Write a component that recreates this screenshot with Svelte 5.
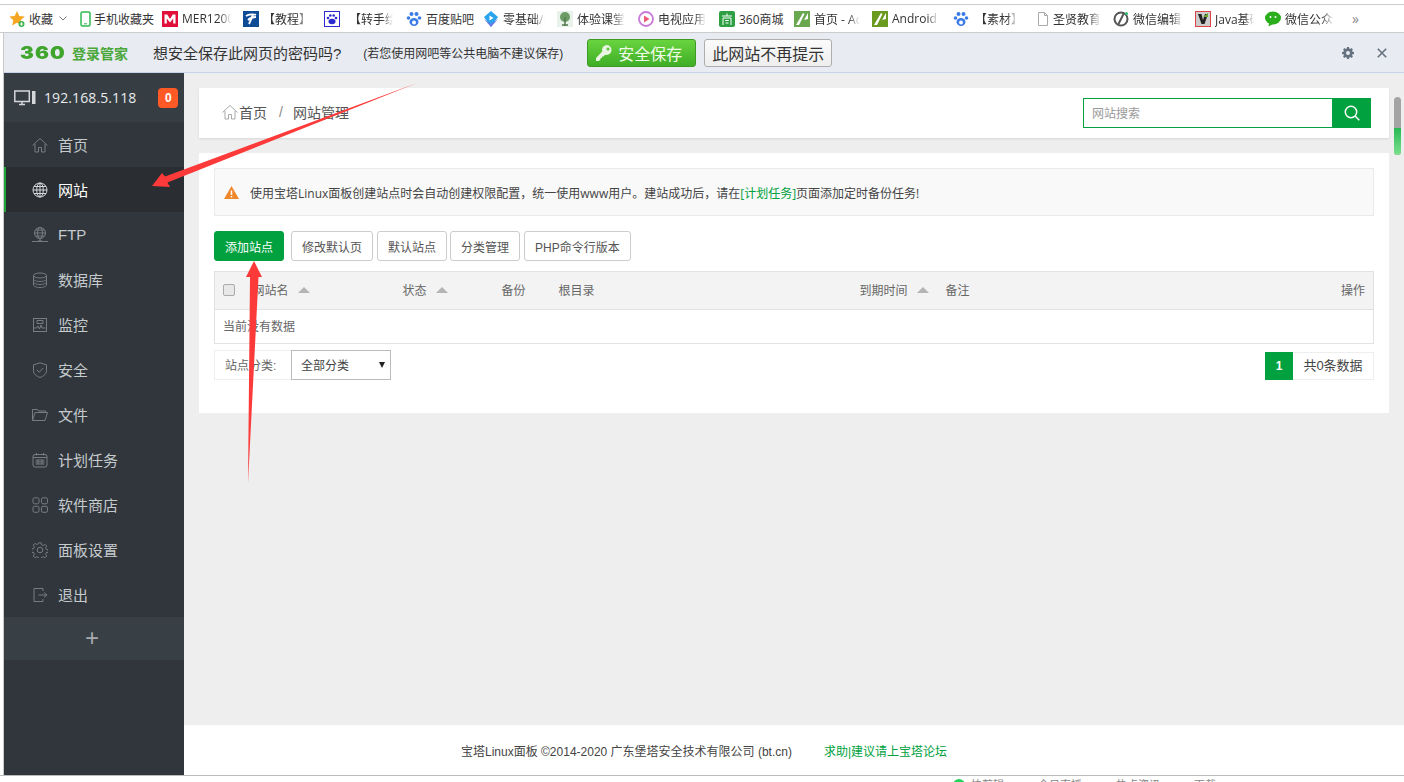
<script>
	const marks = [
		{ id: 'star', text: '收藏', w: 71 },
		{ id: 'phone', text: '手机收藏夹', w: 82, gap: -2 },
		{ id: 'mer', text: 'MER1200', w: 81, clip: 50 },
		{ id: 'tele', text: '【教程】', w: 81, clip: 45 },
		{ id: 'paw2', text: '【转手绘', w: 82, clip: 44, gap: 9 },
		{ id: 'paw', text: '百度贴吧', w: 77 },
		{ id: 'zero', text: '零基础/基', w: 74, clip: 42 },
		{ id: 'tree', text: '体验课堂', w: 81, clip: 48 },
		{ id: 'tv', text: '电视应用', w: 81, clip: 48 },
		{ id: 'shop', text: '360商城', w: 75 },
		{ id: 'as', text: '首页 - Ad', w: 78, clip: 46 },
		{ id: 'as2', text: 'Android', w: 81, clip: 47 },
		{ id: 'paw', text: '【素材】', w: 82, clip: 42, gap: 6 },
		{ id: 'doc', text: '圣贤教育', w: 78, clip: 48, gap: 2 },
		{ id: 'edit', text: '微信编辑', w: 82, clip: 50 },
		{ id: 'java', text: 'Java基础', w: 70, clip: 39 },
		{ id: 'wx', text: '微信公众号', w: 90, clip: 49 }
	];

	const nav = [
		{ id: 'home', text: '首页' },
		{ id: 'globe', text: '网站', active: true },
		{ id: 'ftp', text: 'FTP' },
		{ id: 'db', text: '数据库' },
		{ id: 'monitor', text: '监控' },
		{ id: 'shield', text: '安全' },
		{ id: 'folder', text: '文件' },
		{ id: 'cal', text: '计划任务' },
		{ id: 'apps', text: '软件商店' },
		{ id: 'gear', text: '面板设置' },
		{ id: 'exit', text: '退出' }
	];

	const toolbar = [
		{ text: '修改默认页', gap: 4 },
		{ text: '默认站点', gap: 3 },
		{ text: '分类管理', gap: 4 },
		{ text: 'PHP命令行版本', gap: 0 }
	];
</script>

{#snippet markIcon(id)}
	<svg class="mark-icon" viewBox="0 0 16 16">
		{#if id === 'star'}
			<path d="M8 0l2.3 5 5.4.6-4 3.6 1.1 5.3L8 11.8 3.2 14.500l1.100-5.300-4-3.600L5.700 5z" fill="#f5a623" />
			<circle cx="12.500" cy="13" r="3" fill="#3cb44a" />
			<path d="M12.500 11.300v3.400M10.800 13h3.400" stroke="#fff" stroke-width="1" />
		{:else if id === 'phone'}
			<rect x="1" y="1" width="9" height="14" rx="1.500" fill="none" stroke="#2dbb4f" stroke-width="1.500" />
			<path d="M4 12.800h3" stroke="#2dbb4f" />
		{:else if id === 'mer'}
			<rect width="16" height="16" fill="#e0103a" />
			<path d="M2.500 12.500V3.500h2.700L8 8l2.800-4.500h2.700v9h-2.300V7.500L8 11.500 4.800 7.500v5z" fill="#fff" />
		{:else if id === 'tele'}
			<rect width="16" height="16" fill="#0f4c96" />
			<path d="M3 5c3-2 8-2 10-1M5 9c2-2 5-3 8-3M10 3c-1 4-3 8-4 10" fill="none" stroke="#fff" stroke-width="1.800" />
		{:else if id === 'paw2'}
			<rect x=".5" y=".5" width="15" height="15" fill="#fff" stroke="#2b2bd0" />
			<ellipse cx="8" cy="10.500" rx="3.500" ry="2.800" fill="#2b2bd0" />
			<circle cx="4" cy="7" r="1.300" fill="#2b2bd0" /><circle cx="12" cy="7" r="1.300" fill="#2b2bd0" />
			<circle cx="6.300" cy="4.500" r="1.300" fill="#2b2bd0" /><circle cx="9.700" cy="4.500" r="1.300" fill="#2b2bd0" />
		{:else if id === 'paw'}
			<ellipse cx="8" cy="11" rx="4.500" ry="4" fill="#3a7be8" />
			<circle cx="2.500" cy="7" r="1.800" fill="#3a7be8" /><circle cx="13.500" cy="7" r="1.800" fill="#3a7be8" />
			<circle cx="5.500" cy="3" r="2" fill="#3a7be8" /><circle cx="10.500" cy="3" r="2" fill="#3a7be8" />
			<circle cx="8" cy="11.500" r="2" fill="#fff" />
		{:else if id === 'zero'}
			<path d="M8 0l7 6-7 10L1 6z" fill="#2aa4ec" />
			<path d="M1 8l7 8 7-8-7 5z" fill="#6b78e6" />
			<path d="M6.500 4.500l4 2.500-4 2.500z" fill="#fff" />
		{:else if id === 'tree'}
			<rect width="16" height="16" fill="#e8f1ea" />
			<circle cx="8" cy="6" r="5" fill="#6b9c66" />
			<path d="M8 6v9M5 14h6" stroke="#557a4e" stroke-width="1.500" />
		{:else if id === 'tv'}
			<circle cx="8" cy="8" r="7" fill="none" stroke="#c77ad8" stroke-width="1.800" />
			<path d="M6 4.500l5.500 3.500L6 11.500z" fill="#ef5a7a" />
		{:else if id === 'shop'}
			<rect width="16" height="16" rx="2" fill="#2ea043" />
			<path d="M3 5h10M8 2.500V5M4 14V7h8v7M6.200 9.500h3.600M6.500 12h3" stroke="#fff" fill="none" />
		{:else if id === 'as' || id === 'as2'}
			<rect width="16" height="16" fill={id === 'as' ? '#6aa84f' : '#6a9a1f'} />
			<path d="M2 14L9 2l1.500 1L5 14zM10 9l4-7v6z" fill="#fff" />
		{:else if id === 'doc'}
			<path d="M3.500 1.500h6l3 3v10h-9z" fill="#fff" stroke="#aaa" />
			<path d="M9.500 1.500v3h3" fill="none" stroke="#aaa" />
		{:else if id === 'edit'}
			<circle cx="8" cy="8" r="6.500" fill="none" stroke="#555" stroke-width="2" />
			<path d="M10.500 3L5.500 13" stroke="#555" stroke-width="2" />
			<circle cx="13.500" cy="2.500" r="1.500" fill="#2dbb6f" />
		{:else if id === 'java'}
			<rect x=".5" y=".5" width="15" height="15" fill="#ccc" stroke="#d44" />
			<path d="M3 3l3.500 10h3L13 3h-3L8 9 6.500 3z" fill="#222" />
			<path d="M8 6l5-4v4z" fill="#6aa82f" />
		{:else if id === 'wx'}
			<ellipse cx="8" cy="7" rx="8" ry="6.500" fill="#2aae1c" />
			<path d="M4 12l-.500 3.500L8 13z" fill="#2aae1c" />
			<circle cx="5.500" cy="6" r="1" fill="#fff" /><circle cx="10.500" cy="6" r="1" fill="#fff" />
		{/if}
	</svg>
{/snippet}

{#snippet navIcon(id)}
	<svg class="nav-icon" viewBox="0 0 16 16" fill="none" stroke="currentColor">
		{#if id === 'home'}
			<path d="M.5 8.500L8 1.500l7.500 7M3 7v8h3.500v-4.500h3V15H13V7" />
		{:else if id === 'globe'}
			<circle cx="8" cy="8" r="7" />
			<ellipse cx="8" cy="8" rx="3.300" ry="7" />
			<path d="M1 8h14M2 4.500h12M2 11.500h12M8 1v14" />
		{:else if id === 'ftp'}
			<circle cx="8" cy="6" r="5.500" />
			<ellipse cx="8" cy="6" rx="2.500" ry="5.500" />
			<path d="M2.500 6h11M3.500 3h9M3.500 9h9M8 11.500v2.500M0 14.500h16M6 14h4" />
		{:else if id === 'db'}
			<ellipse cx="8" cy="3.500" rx="6.500" ry="2.500" />
			<path d="M1.500 3.500v9.500c0 1.400 3 2.500 6.500 2.500s6.500-1.100 6.500-2.500V3.500M1.500 7c0 1.400 3 2.500 6.500 2.500s6.500-1.100 6.500-2.500M1.500 10c0 1.400 3 2.500 6.500 2.500s6.500-1.100 6.500-2.500" />
		{:else if id === 'monitor'}
			<rect x="1.500" y="1.500" width="13" height="13" />
			<path d="M1.500 11h3l1.500-2 1.500 3 1.500-4 1 3h3.500M5 3.500h6v3H5z" />
		{:else if id === 'shield'}
			<path d="M8 .8l6.500 2v6c0 3-2.500 5.200-6.500 6.700-4-1.500-6.500-3.700-6.500-6.700v-6z" />
			<path d="M4.800 7.800l2.400 2.400 4-4.200" />
		{:else if id === 'folder'}
			<path d="M.5 13.500v-11h5l1.200 1.500h7v1.500M.5 13.500h12.500L15.500 5.500H3z" />
		{:else if id === 'cal'}
			<rect x="1" y="2.500" width="14" height="12.500" rx="2" />
			<path d="M4.500 1v2.500M11.500 1v2.500M1 5.500h14M3.500 8h9M3.500 10h9M3.500 12h9M6 8v4M10 8v4" />
		{:else if id === 'apps'}
			<rect x="1" y=".8" width="6" height="6" rx="1.500" />
			<rect x="9.500" y=".8" width="6" height="6" rx="1.500" />
			<rect x="1" y="9.300" width="6" height="6" rx="1.500" />
			<rect x="9.500" y="9.300" width="6" height="6" rx="1.500" />
		{:else if id === 'gear'}
			<circle cx="8" cy="8" r="2.800" />
			<path d="M6.800 .8h2.400l.4 2 1.600.7 1.800-1.100 1.700 1.700-1.100 1.800.7 1.600 2 .4v2.400l-2 .4-.7 1.600 1.100 1.800-1.700 1.700-1.800-1.100-1.600.7-.4 2H6.800l-.4-2-1.600-.7-1.800 1.100-1.700-1.700 1.100-1.800-.7-1.600-2-.4V6.900l2-.4.7-1.600-1.100-1.800 1.700-1.700 1.800 1.100 1.600-.7z" />
		{:else if id === 'exit'}
			<path d="M11 4V1.500H2v13h9V12M6.500 8h8.500M12 5.500L15 8l-3 2.500" />
		{/if}
	</svg>
{/snippet}

<div class="page">
	<div class="browser-top"></div>
	<div class="marks">
		{#each marks as m}
			<div class="mark" style="width: {m.w}px">
				{@render markIcon(m.id)}
				<span class="mark-text" class:fade={m.clip} style="margin-left: {m.gap ?? 4}px; {m.clip ? `width: ${m.clip}px` : ''}">{m.text}</span>
				{#if m.id === 'star'}
					<svg class="caret" viewBox="0 0 8 5"><path d="M.5.500L4 4l3.500-3.500" fill="none" stroke="#777" /></svg>
				{/if}
			</div>
		{/each}
		<span class="more">»</span>
	</div>

	<div class="frame">
		<div class="savebar">
			<span class="logo">360</span>
			<span class="logo-name">登录管家</span>
			<span class="ask">想安全保存此网页的密码吗?</span>
			<span class="hint">(若您使用网吧等公共电脑不建议保存)</span>
			<button class="save">
				<svg viewBox="0 0 16 16" class="key"><path d="M10.500 0a5 5 0 0 1 0 10c-.6 0-1-.1-1.500-.2L7.500 11.500H6V13H4.500v1.500L3 16H0v-3l6.200-6.400A5 5 0 0 1 10.500 0zm1.500 2.500a1.500 1.500 0 1 0 0 3 1.500 1.500 0 0 0 0-3z" fill="#e9f5e2" fill-rule="evenodd" /></svg>
				安全保存
			</button>
			<button class="nosave">此网站不再提示</button>
			<div class="spacer"></div>
			<svg class="bar-gear" viewBox="0 0 12 12"><path d="M5 0h2l.3 1.500 1 .4 1.300-.8 1.300 1.300-.8 1.300.4 1L12 5v2l-1.500.3-.4 1 .8 1.300-1.300 1.300-1.300-.8-1 .4L7 12H5l-.3-1.500-1-.4-1.300.8-1.300-1.300.8-1.300-.4-1L0 7V5l1.500-.3.4-1-.8-1.300 1.300-1.300 1.300.8 1-.4zM6 4a2 2 0 1 0 0 4 2 2 0 0 0 0-4z" fill="#66727f" fill-rule="evenodd" /></svg>
			<svg class="bar-close" viewBox="0 0 10 10"><path d="M.8.800l8.400 8.400M9.200.800L.8 9.200" stroke="#66727f" stroke-width="1.600" /></svg>
		</div>

		<div class="panel">
			<aside class="sidebar">
				<div class="host">
					<svg class="host-icon" viewBox="0 0 22 16" fill="none" stroke="#d5d8da" stroke-width="1.500"><rect x=".8" y="1" width="14.500" height="10.500" /><path d="M5 14.500h6M8 11.500v3" /><rect x="18" y="1" width="3.500" height="13" fill="#d5d8da" stroke="none" /></svg>
					<span class="ip">192.168.5.118</span>
					<span class="badge">0</span>
				</div>
				<nav>
					{#each nav as n}
						<div class="nav-item" class:active={n.active}>
							{@render navIcon(n.id)}
							<span>{n.text}</span>
						</div>
					{/each}
				</nav>
				<div class="plus">+</div>
			</aside>

			<main class="main">
				<div class="crumbs">
					<svg class="crumb-home" viewBox="0 0 16 16" fill="none" stroke="#aaa"><path d="M.5 8.500L8 1.500l7.500 7M3 7v8h3.500v-4.500h3V15H13V7" /></svg>
					<span class="crumb-first">首页</span>
					<span class="crumb-sep">/</span>
					<span>网站管理</span>
					<div class="spacer"></div>
					<div class="search">
						<span class="search-input">网站搜索</span>
						<span class="search-btn">
							<svg viewBox="0 0 16 16" fill="none" stroke="#fff" stroke-width="1.500"><circle cx="7" cy="7" r="5.700" /><path d="M11 11l4.300 4.300" /></svg>
						</span>
					</div>
				</div>

				<div class="content">
					<div class="alert">
						<svg class="warn" viewBox="0 0 15 13"><path d="M7.500 0L15 13H0z" fill="#f0872a" /><path d="M7.500 4.500v4.500M7.500 10v1.500" stroke="#fff" stroke-width="1.500" /></svg>
						<span>使用宝塔Linux面板创建站点时会自动创建权限配置，统一使用www用户。建站成功后，请在<span class="link">[计划任务]</span>页面添加定时备份任务!</span>
					</div>

					<div class="toolbar">
						<button class="add">添加站点</button>
						{#each toolbar as t}
							<button class="tool" style="margin-right: {t.gap}px">{t.text}</button>
						{/each}
					</div>

					<table>
						<colgroup>
							<col style="width: 30px" /><col style="width: 150px" /><col style="width: 99px" /><col style="width: 57px" />
							<col style="width: 301px" /><col style="width: 86px" /><col style="width: 300px" /><col />
						</colgroup>
						<thead>
							<tr>
								<th><span class="check"></span></th>
								<th>网站名<i class="sort"></i></th>
								<th>状态<i class="sort"></i></th>
								<th>备份</th>
								<th>根目录</th>
								<th>到期时间<i class="sort"></i></th>
								<th>备注</th>
								<th class="right">操作</th>
							</tr>
						</thead>
						<tbody>
							<tr><td colspan="8">当前没有数据</td></tr>
						</tbody>
					</table>

					<div class="under">
						<div class="filter">
							<span class="filter-label">站点分类:</span>
							<span class="select">全部分类<i class="select-caret"></i></span>
						</div>
						<div class="pager">
							<span class="page-cur">1</span>
							<span class="page-total">共0条数据</span>
						</div>
					</div>
				</div>

				<footer class="foot">
					<span>宝塔Linux面板 ©2014-2020 广东堡塔安全技术有限公司 (bt.cn)</span>
					<span class="foot-link">求助|建议请上宝塔论坛</span>
				</footer>
			</main>
		</div>
	</div>

	<div class="status">
		<i class="status-dot"></i>
		<span>快剪辑</span><span>今日直播</span><span>热点资讯</span><span>下载</span>
	</div>

	<div class="scroll"><i class="scroll-green"></i></div>

	<svg class="arrows" viewBox="0 0 1404 782" width="1404" height="782">
		<path d="M417 83L165 176.500 162 173 152 186 170 187 167.500 182.500z" fill="#fc3a3a" />
		<path d="M254 261L246 277 250 277 248 483 258.500 277 262 277z" fill="#fc3a3a" />
	</svg>
</div>

<style>
	:global(body) {
		margin: 0;
		background: #fff;
	}
	.page {
		position: relative;
		display: flex;
		flex-direction: column;
		width: 1404px;
		height: 782px;
		overflow: hidden;
		font-family: 'Liberation Sans', 'Noto Sans CJK SC', sans-serif;
		color: #444;
	}
	.browser-top {
		height: 4px;
		border-bottom: 1px solid #ccc;
		flex: none;
	}
	.marks {
		display: flex;
		align-items: center;
		height: 27px;
		padding-left: 9px;
		border-bottom: 1px solid #ccc;
		flex: none;
		font-family: 'Open Sans', 'Noto Sans CJK SC', sans-serif;
		font-size: 12px;
		color: #333;
	}
	.mark {
		display: flex;
		align-items: center;
		flex: none;
		white-space: nowrap;
	}
	.mark-icon {
		width: 16px;
		height: 16px;
		flex: none;
	}
	.mark-text {
		flex: none;
		overflow: hidden;
	}
	.fade {
		-webkit-mask-image: linear-gradient(to right, #000 75%, transparent);
		mask-image: linear-gradient(to right, #000 75%, transparent);
	}
	.caret {
		width: 8px;
		height: 5px;
		margin-left: 6px;
	}
	.more {
		margin-left: -3px;
		font-size: 14px;
		color: #888;
	}
	.frame {
		display: flex;
		flex-direction: column;
		flex: 1;
		min-height: 0;
		margin-left: 3px;
		border-left: 1px solid #c9c9c9;
	}
	.savebar {
		display: flex;
		align-items: center;
		height: 39px;
		padding-left: 16px;
		background: #e8ebf1;
		border-bottom: 1px solid #c7d3ea;
		flex: none;
	}
	.logo {
		width: 44px;
		font-family: Inter, sans-serif;
		font-size: 18px;
		font-weight: 900;
		letter-spacing: 1px;
		color: #3fa52c;
		transform: scaleX(1.15);
		transform-origin: left center;
	}
	.logo-name {
		margin-left: 8px;
		font-size: 14px;
		font-weight: 700;
		color: #4aa73a;
	}
	.ask {
		margin-left: 25px;
		font-size: 15px;
		color: #333;
	}
	.hint {
		margin-left: 22px;
		font-size: 12px;
		color: #333;
	}
	.save,
	.nosave {
		height: 28px;
		padding: 0;
		border-radius: 3px;
		font-family: inherit;
		font-size: 16px;
	}
	.save {
		display: flex;
		align-items: center;
		width: 109px;
		margin-left: 24px;
		padding-left: 8px;
		gap: 6px;
		border: 1px solid #3d9a24;
		background: linear-gradient(#69d43f, #3fae27);
		color: #f2fbe9;
	}
	.key {
		width: 16px;
		height: 16px;
	}
	.nosave {
		width: 128px;
		margin-left: 8px;
		border: 1px solid #aeaeae;
		background: linear-gradient(#fbfbfb, #eeeeee);
		color: #333;
	}
	.spacer {
		flex: 1;
	}
	.bar-gear {
		width: 12px;
		height: 12px;
		margin-right: 23px;
	}
	.bar-close {
		width: 10px;
		height: 10px;
		margin-right: 17px;
	}
	.panel {
		display: flex;
		flex: 1;
		min-height: 0;
	}
	.sidebar {
		width: 180px;
		flex: none;
		background: #30363c;
	}
	.host {
		display: flex;
		align-items: center;
		height: 49px;
		padding-left: 10px;
		background: #363d43;
		color: #e8eaeb;
	}
	.host-icon {
		width: 22px;
		height: 16px;
		flex: none;
	}
	.ip {
		margin-left: 8px;
		font-family: 'Open Sans', sans-serif;
		font-size: 14px;
		letter-spacing: 0.1px;
	}
	.badge {
		width: 20px;
		height: 20px;
		margin-left: 22px;
		border-radius: 4px;
		background: #ff5a26;
		color: #fff;
		font-size: 12px;
		font-weight: 700;
		line-height: 20px;
		text-align: center;
	}
	.nav-item {
		display: flex;
		align-items: center;
		height: 45px;
		padding-left: 28px;
		font-size: 15px;
		color: #c5cacd;
	}
	.nav-item.active {
		padding-left: 26px;
		border-left: 2px solid #20a53a;
		background: #2a2d32;
		color: #fff;
	}
	.nav-item.active .nav-icon {
		color: #d5d8da;
	}
	.nav-icon {
		width: 16px;
		height: 16px;
		margin-right: 10px;
		flex: none;
		color: #777c80;
		stroke-width: 1;
	}
	.plus {
		height: 43px;
		padding-right: 4px;
		background: #383f45;
		color: #a8acaf;
		font-size: 24px;
		line-height: 41px;
		text-align: center;
	}
	.main {
		display: flex;
		flex-direction: column;
		flex: 1;
		min-width: 0;
		padding-top: 15px;
		background: #eeeeee;
	}
	.crumbs {
		display: flex;
		align-items: center;
		height: 50px;
		margin: 0 15px;
		padding: 0 18px 2px 23px;
		box-sizing: border-box;
		background: #fff;
		box-shadow: 0 1px 2px rgba(0, 0, 0, 0.1);
		font-size: 14px;
		color: #555;
	}
	.crumb-home {
		width: 16px;
		height: 16px;
		flex: none;
	}
	.crumb-first {
		margin-left: 1px;
	}
	.crumb-sep {
		margin: 0 10px 0 12px;
		color: #888;
	}
	.search {
		display: flex;
		width: 288px;
		height: 30px;
		margin-bottom: -2px;
	}
	.search-input {
		flex: 1;
		padding-left: 8px;
		border: 1px solid #00a13e;
		border-right: 0;
		font-size: 12px;
		line-height: 30px;
		color: #999;
	}
	.search-btn {
		display: flex;
		align-items: center;
		justify-content: center;
		width: 39px;
		background: #00a13e;
	}
	.search-btn svg {
		width: 16px;
		height: 16px;
	}
	.content {
		height: 230px;
		margin: 15px 15px 0;
		padding: 15px 15px 15px;
		background: #fff;
	}
	.alert {
		display: flex;
		align-items: center;
		box-sizing: border-box;
		height: 48px;
		padding: 1px 0 0 9px;
		border: 1px solid #eaeaea;
		background: #f9f9f9;
		font-family: 'Open Sans', 'Noto Sans CJK SC', sans-serif;
		font-size: 12px;
		color: #444;
	}
	.warn {
		width: 15px;
		height: 13px;
		margin-right: 11px;
	}
	.link {
		color: #00a13e;
	}
	.toolbar {
		display: flex;
		margin: 15px 0 10px;
	}
	.toolbar button {
		box-sizing: border-box;
		height: 30px;
		padding: 0 10px;
		border-radius: 3px;
		font-family: inherit;
		font-size: 12px;
		white-space: nowrap;
	}
	.toolbar .add {
		width: 70px;
		margin-right: 7px;
		padding: 0;
		border: 1px solid #00a13e;
		background: #00a13e;
		color: #fff;
	}
	.tool {
		border: 1px solid #ccc;
		background: #fff;
		color: #555;
	}
	table {
		width: 1160px;
		border-collapse: collapse;
		table-layout: fixed;
		font-size: 12px;
		color: #666;
	}
	th {
		height: 38px;
		padding: 0 8px 2px;
		box-sizing: border-box;
		border-top: 1px solid #e2e2e2;
		border-bottom: 1px solid #e2e2e2;
		background: #f3f3f3;
		font-weight: 400;
		text-align: left;
		white-space: nowrap;
		color: #666;
	}
	th:first-child {
		border-left: 1px solid #e2e2e2;
	}
	th:last-child {
		border-right: 1px solid #e2e2e2;
	}
	th.right {
		text-align: right;
	}
	td {
		height: 34px;
		padding: 0 8px 2px;
		box-sizing: border-box;
		border: 1px solid #e2e2e2;
		border-top: 0;
	}
	.check {
		display: block;
		box-sizing: border-box;
		width: 12px;
		height: 12px;
		border: 1px solid #aaa;
		border-radius: 2px;
		background: #e8e8e8;
	}
	.sort {
		display: inline-block;
		margin-left: 9px;
		border-left: 6px solid transparent;
		border-right: 6px solid transparent;
		border-bottom: 6px solid #b4b4b4;
		vertical-align: 2px;
	}
	.under {
		display: flex;
		align-items: flex-start;
		justify-content: space-between;
		margin-top: 6px;
	}
	.filter {
		display: flex;
		height: 30px;
		font-size: 12px;
	}
	.filter-label {
		box-sizing: border-box;
		width: 77px;
		padding-left: 10px;
		border: 1px solid #eee;
		border-right: 0;
		line-height: 30px;
		color: #666;
	}
	.select {
		position: relative;
		box-sizing: border-box;
		width: 100px;
		padding-left: 9px;
		border: 1px solid #bbb;
		line-height: 30px;
		color: #444;
	}
	.select-caret {
		position: absolute;
		top: 11px;
		right: 5px;
		border-left: 3.500px solid transparent;
		border-right: 3.500px solid transparent;
		border-top: 6px solid #222;
	}
	.pager {
		display: flex;
		height: 28px;
		margin-top: 2px;
		font-size: 13px;
		line-height: 28px;
	}
	.page-cur {
		width: 28px;
		background: #00a13e;
		color: #fff;
		font-size: 12px;
		font-weight: 700;
		text-align: center;
	}
	.page-total {
		box-sizing: border-box;
		width: 81px;
		border: 1px solid #eee;
		border-left: 0;
		line-height: 26px;
		text-align: center;
		color: #444;
	}
	.foot {
		display: flex;
		align-items: center;
		height: 50px;
		margin-top: auto;
		padding-left: 277px;
		background: #fff;
		font-size: 12px;
		color: #444;
	}
	.foot-link {
		margin-left: 32px;
		color: #00a13e;
	}
	.status {
		display: flex;
		gap: 34px;
		height: 3px;
		padding: 3px 0 0 953px;
		border-top: 1px solid #bbb;
		flex: none;
		overflow: hidden;
		font-size: 11px;
		line-height: 12px;
		color: #888;
	}
	.status-dot {
		flex: none;
		width: 12px;
		height: 12px;
		margin-right: -28px;
		border-radius: 50%;
		background: #21d45a;
	}
	.scroll {
		position: absolute;
		top: 97px;
		left: 1394px;
		width: 7px;
		height: 58px;
		border-radius: 4px;
		overflow: hidden;
		background: #a4a4a4;
	}
	.scroll-green {
		position: absolute;
		left: 0;
		right: 0;
		bottom: 0;
		height: 27px;
		background: linear-gradient(#28b955, #7de08f);
	}
	.arrows {
		position: absolute;
		inset: 0;
		pointer-events: none;
	}
</style>
